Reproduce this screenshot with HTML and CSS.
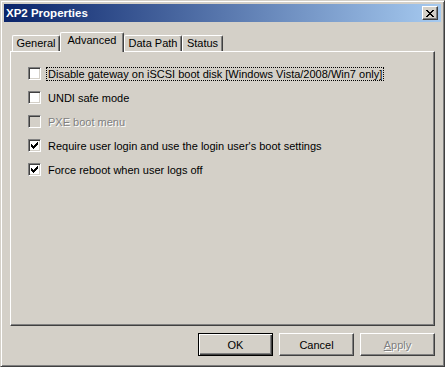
FILE: index.html
```html
<!DOCTYPE html>
<html>
<head>
<meta charset="utf-8">
<link rel="stylesheet" href="styles.css">
</head>
<body>
<div class="window">
  <div class="titlebar">
    <span class="title">XP2 Properties</span>
    <div class="close">
      <svg width="8" height="7" viewBox="0 0 8 7" shape-rendering="crispEdges"><path d="M0 0h2v1h-2z M6 0h2v1h-2z M1 1h2v1h-2z M5 1h2v1h-2z M2 2h4v1h-4z M3 3h2v1h-2z M2 4h4v1h-4z M1 5h2v1h-2z M5 5h2v1h-2z M0 6h2v1h-2z M6 6h2v1h-2z" fill="#000"/></svg>
    </div>
  </div>
  <div class="body">
    <div class="tabs">
      <div class="tab t-general">General</div>
      <div class="tab selected t-adv">Advanced</div>
      <div class="tab t-data">Data Path</div>
      <div class="tab t-status">Status</div>
    </div>
    <div class="panel">
      <div class="opt">
        <span class="cb"></span>
        <span class="lbl focus">Disable gateway on iSCSI boot disk [Windows Vista/2008/Win7 only]</span>
      </div>
      <div class="opt">
        <span class="cb"></span>
        <span class="lbl">UNDI safe mode</span>
      </div>
      <div class="opt disabled">
        <span class="cb"></span>
        <span class="lbl">PXE boot menu</span>
      </div>
      <div class="opt">
        <span class="cb"><svg width="9" height="9" viewBox="0 0 9 9" shape-rendering="crispEdges"><path d="M1 3h1v3h-1z M2 4h1v3h-1z M3 5h1v3h-1z M4 4h1v3h-1z M5 3h1v3h-1z M6 2h1v3h-1z M7 1h1v3h-1z" fill="#000"/></svg></span>
        <span class="lbl">Require user login and use the login user's boot settings</span>
      </div>
      <div class="opt">
        <span class="cb"><svg width="9" height="9" viewBox="0 0 9 9" shape-rendering="crispEdges"><path d="M1 3h1v3h-1z M2 4h1v3h-1z M3 5h1v3h-1z M4 4h1v3h-1z M5 3h1v3h-1z M6 2h1v3h-1z M7 1h1v3h-1z" fill="#000"/></svg></span>
        <span class="lbl">Force reboot when user logs off</span>
      </div>
    </div>
    <div class="buttons">
      <div class="btn default">OK</div>
      <div class="btn">Cancel</div>
      <div class="btn disabled"><u>A</u>pply</div>
    </div>
  </div>
</div>
</body>
</html>
```
FILE: styles.css
```css
html, body {
  margin: 0;
  padding: 0;
  background: #d4d0c8;
}
body {
  font-family: "Liberation Sans", Arial, sans-serif;
  font-size: 11px;
  color: #000;
}
.window {
  box-sizing: border-box;
  width: 445px;
  height: 367px;
  background: #d4d0c8;
  border: 1px solid;
  border-color: #d4d0c8 #404040 #404040 #d4d0c8;
  box-shadow: inset 1px 1px #fff, inset -1px -1px #808080;
  padding: 3px;
}
.titlebar {
  height: 18px;
  background: linear-gradient(to right, #0a246a, #a6caf0);
  display: flex;
  align-items: center;
  justify-content: space-between;
  padding: 0 3px 0 2px;
}
.title {
  color: #fff;
  font-weight: bold;
  font-size: 11.5px;
  line-height: 18px;
}
.close {
  box-sizing: border-box;
  width: 16px;
  height: 14px;
  background: #d4d0c8;
  border: 1px solid;
  border-color: #fff #404040 #404040 #fff;
  box-shadow: inset -1px -1px #808080;
  display: flex;
  align-items: center;
  justify-content: center;
  padding-right: 1px;
}
.close svg { display: block; }
.body {
  padding: 10px 6px 0 6px;
}
.tabs {
  display: flex;
  align-items: flex-end;
  height: 19px;
  padding-left: 2px;
}
.tab {
  box-sizing: border-box;
  height: 16px;
  line-height: 15px;
  text-align: center;
  border-top: 1px solid #fff;
  border-left: 1px solid #fff;
  border-right: 1px solid #404040;
  box-shadow: inset -1px 0 #808080;
  border-radius: 2px 2px 0 0;
  white-space: nowrap;
}
.tab.selected {
  height: 20px;
  margin-bottom: -1px;
  padding-bottom: 4px;
  background: #d4d0c8;
  position: relative;
  z-index: 1;
}
.t-general { width: 48px; }
.t-adv { width: 64px; }
.t-data { width: 58px; }
.t-status { width: 41px; }
.panel {
  box-sizing: border-box;
  height: 275px;
  border: 1px solid;
  border-color: #fff #404040 #404040 #fff;
  box-shadow: inset -1px -1px #808080;
  padding: 15px 0 0 17px;
  display: flex;
  flex-direction: column;
  gap: 11px;
}
.opt {
  display: flex;
  align-items: center;
  height: 13px;
  gap: 5px;
}
.cb {
  box-sizing: border-box;
  width: 13px;
  height: 13px;
  flex: none;
  background: #fff;
  border: 1px solid;
  border-color: #808080 #fff #fff #808080;
  box-shadow: inset 1px 1px #404040, inset -1px -1px #d4d0c8;
  padding: 1px;
}
.cb svg { display: block; }
.lbl {
  border: 1px solid transparent;
  padding: 0 1px;
  line-height: 12px;
  white-space: nowrap;
}
.lbl.focus {
  border: 1px dotted #000;
}
.opt.disabled .cb {
  background: #d4d0c8;
}
.opt.disabled .lbl {
  color: #808080;
  text-shadow: 1px 1px 0 #fff;
}
.buttons {
  display: flex;
  justify-content: flex-end;
  gap: 6px;
  margin-top: 7px;
}
.btn {
  box-sizing: border-box;
  width: 75px;
  height: 23px;
  display: flex;
  align-items: center;
  justify-content: center;
  border: 1px solid;
  border-color: #fff #404040 #404040 #fff;
  box-shadow: inset -1px -1px #808080;
}
.btn.default {
  border-color: #000;
  box-shadow: inset 1px 1px #fff, inset -1px -1px #404040, inset -2px -2px #808080;
}
.btn.disabled {
  color: #808080;
  text-shadow: 1px 1px 0 #fff;
}
```
